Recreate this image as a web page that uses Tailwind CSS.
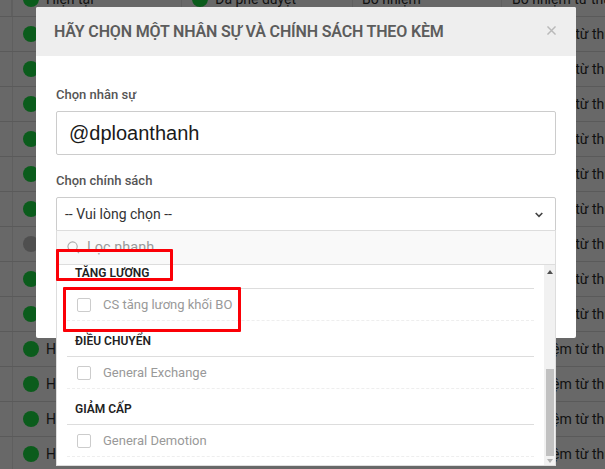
<!DOCTYPE html>
<html>
<head>
<meta charset="utf-8">
<script src="https://cdn.jsdelivr.net/npm/@tailwindcss/browser@4"></script>
</head>
<body class="m-0">
<div class="relative w-[605px] h-[469px] overflow-hidden bg-[#686868] font-['Roboto',sans-serif] text-[14px] text-[#111]">
  <!-- background table -->
  <div class="-mt-[18px] flex flex-col bg-[linear-gradient(#5f5f5f,#5f5f5f)] bg-[length:1px_100%] bg-[position:12px_0] bg-no-repeat">
    <div class="h-[35px] border-b border-[#5a5a5a] grid grid-cols-[12px_170px_171px_149px_103px]"><div class="border-r border-[#5f5f5f]"></div><div class="border-r border-[#5f5f5f] flex items-center pl-[11px] gap-[7px]"><span class="w-4 h-4 rounded-full bg-[#0b5c1c]"></span>Hiện tại</div><div class="border-r border-[#5f5f5f] flex items-center pl-[10px] gap-[7px]"><span class="w-4 h-4 rounded-full bg-[#0b5c1c]"></span>Đã phê duyệt</div><div class="border-r border-[#5f5f5f] flex items-center pl-[9px] whitespace-nowrap">Bổ nhiệm</div><div class="flex items-center pl-[10px] whitespace-nowrap">Bổ nhiệm từ thử việc</div></div>
    <div class="h-[35px] border-b border-[#5a5a5a] flex items-center pl-[23px] gap-[7px] whitespace-nowrap"><span class="w-4 h-4 rounded-full bg-[#0b5c1c] shrink-0"></span><span class="w-[460px] shrink-0">Hiện tại</span>Bổ nhiệm từ thử việc</div>
    <div class="h-[35px] border-b border-[#5a5a5a] flex items-center pl-[23px] gap-[7px] whitespace-nowrap"><span class="w-4 h-4 rounded-full bg-[#0b5c1c] shrink-0"></span><span class="w-[460px] shrink-0">Hiện tại</span>Bổ nhiệm từ thử việc</div>
    <div class="h-[35px] border-b border-[#5a5a5a] flex items-center pl-[23px] gap-[7px] whitespace-nowrap"><span class="w-4 h-4 rounded-full bg-[#0b5c1c] shrink-0"></span><span class="w-[460px] shrink-0">Hiện tại</span>Bổ nhiệm từ thử việc</div>
    <div class="h-[35px] border-b border-[#5a5a5a] flex items-center pl-[23px] gap-[7px] whitespace-nowrap"><span class="w-4 h-4 rounded-full bg-[#0b5c1c] shrink-0"></span><span class="w-[460px] shrink-0">Hiện tại</span>Bổ nhiệm từ thử việc</div>
    <div class="h-[35px] border-b border-[#5a5a5a] flex items-center pl-[23px] gap-[7px] whitespace-nowrap"><span class="w-4 h-4 rounded-full bg-[#0b5c1c] shrink-0"></span><span class="w-[460px] shrink-0">Hiện tại</span>Bổ nhiệm từ thử việc</div>
    <div class="h-[35px] border-b border-[#5a5a5a] flex items-center pl-[23px] gap-[7px] whitespace-nowrap"><span class="w-4 h-4 rounded-full bg-[#0b5c1c] shrink-0"></span><span class="w-[460px] shrink-0">Hiện tại</span>Bổ nhiệm từ thử việc</div>
    <div class="h-[35px] border-b border-[#5a5a5a] flex items-center pl-[23px] gap-[7px] whitespace-nowrap"><span class="w-4 h-4 rounded-full bg-[#4f4f4f] shrink-0"></span><span class="w-[460px] shrink-0">Hiện tại</span>Bổ nhiệm từ thử việc</div>
    <div class="h-[35px] border-b border-[#5a5a5a] flex items-center pl-[23px] gap-[7px] whitespace-nowrap"><span class="w-4 h-4 rounded-full bg-[#0b5c1c] shrink-0"></span><span class="w-[460px] shrink-0">Hiện tại</span>Bổ nhiệm từ thử việc</div>
    <div class="h-[35px] border-b border-[#5a5a5a] flex items-center pl-[23px] gap-[7px] whitespace-nowrap"><span class="w-4 h-4 rounded-full bg-[#0b5c1c] shrink-0"></span><span class="w-[460px] shrink-0">Hiện tại</span>Bổ nhiệm từ thử việc</div>
    <div class="h-[35px] border-b border-[#5a5a5a] flex items-center pl-[23px] gap-[7px] whitespace-nowrap"><span class="w-4 h-4 rounded-full bg-[#0b5c1c] shrink-0"></span><span class="w-[460px] shrink-0">Hiện tại</span>Bổ nhiệm từ thử việc</div>
    <div class="h-[35px] border-b border-[#5a5a5a] flex items-center pl-[23px] gap-[7px] whitespace-nowrap"><span class="w-4 h-4 rounded-full bg-[#0b5c1c] shrink-0"></span><span class="w-[460px] shrink-0">Hiện tại</span>Bổ nhiệm từ thử việc</div>
    <div class="h-[35px] border-b border-[#5a5a5a] flex items-center pl-[23px] gap-[7px] whitespace-nowrap"><span class="w-4 h-4 rounded-full bg-[#0b5c1c] shrink-0"></span><span class="w-[460px] shrink-0">Hiện tại</span>Bổ nhiệm từ thử việc</div>
    <div class="h-[35px] border-b border-[#5a5a5a] flex items-center pl-[23px] gap-[7px] whitespace-nowrap"><span class="w-4 h-4 rounded-full bg-[#0b5c1c] shrink-0"></span><span class="w-[460px] shrink-0">Hiện tại</span>Bổ nhiệm từ thử việc</div>
  </div>

  <!-- modal -->
  <div class="absolute left-[36px] top-[7px] w-[540px] h-[331px] bg-white rounded-[2px]">
    <div class="h-[49px] bg-[#eeeeee] flex items-center justify-between pl-[18px] pr-[20px] rounded-t-[2px]">
      <h2 class="text-[16px] font-semibold text-[#5c5c5c] uppercase whitespace-nowrap tracking-[-0.01em]">Hãy chọn một nhân sự và chính sách theo kèm</h2>
      <svg class="w-[9px] h-[9px] mb-[2px]" viewBox="0 0 10 10" fill="none" stroke="#b9b9b9" stroke-width="1.6"><path d="M0.5 0.5 9.5 9.5M9.5 0.5 0.5 9.5"/></svg>
    </div>
    <div class="px-[20px] pt-[31px]">
      <label class="block text-[13px] font-medium text-[#555] leading-[16px] mb-[8px]">Chọn nhân sự</label>
      <div class="h-[44px] border border-[#cccccc] rounded-[2px] flex items-center pl-[12px] font-['Liberation_Sans',sans-serif] text-[20px] text-[#1a1a1a]">@dploanthanh</div>
      <label class="block text-[13px] font-medium text-[#555] leading-[16px] mt-[18px] mb-[8px]">Chọn chính sách</label>
      <div class="h-[35px] border border-[#cccccc] rounded-t-[2px] flex items-center justify-between pl-[8px] pr-[12px] text-[14px] text-[#333]">
        <span>-- Vui lòng chọn --</span>
        <svg class="w-[8px] h-[6px]" viewBox="0 0 8 6" fill="none" stroke="#444" stroke-width="1.6"><path d="M0.7 1 4 4.4 7.3 1"/></svg>
      </div>
    </div>
  </div>

  <!-- dropdown -->
  <div class="absolute left-[56px] top-[230px] w-[500px] h-[236px] bg-white border border-[#dddddd] flex flex-col">
    <div class="h-[34px] shrink-0 bg-[#f9f9f9] border-b border-[#dddddd] flex items-center pl-[10px] gap-[7px] text-[14.5px] text-[#999]">
      <svg class="w-[13px] h-[13px]" viewBox="0 0 14 14" fill="none" stroke="#aaa" stroke-width="1.2"><circle cx="6" cy="6" r="5"/><path d="M10 10 13 13"/></svg>
      <span>Lọc nhanh</span>
    </div>
    <div class="flex flex-1 min-h-0">
      <div class="flex-1 pl-[10px] pr-[10px]">
        <div class="h-[24px] border-b border-[#dddddd] flex items-end pl-[8px] pb-[9px] text-[12px] font-semibold text-[#222] leading-none">TĂNG LƯƠNG</div>
        <div class="h-[32px] border-b border-dashed border-[#eeeeee] flex items-center pl-[10px] gap-[12px] text-[13px] text-[#999]"><span class="w-[14px] h-[14px] border border-[#cccccc] rounded-[2px]"></span>CS tăng lương khối BO</div>
        <div class="h-[36px] border-b border-[#dddddd] flex items-end pl-[8px] pb-[9px] text-[12px] font-semibold text-[#222] leading-none">ĐIỀU CHUYỂN</div>
        <div class="h-[32px] border-b border-dashed border-[#eeeeee] flex items-center pl-[10px] gap-[12px] text-[13px] text-[#999]"><span class="w-[14px] h-[14px] border border-[#cccccc] rounded-[2px]"></span>General Exchange</div>
        <div class="h-[36px] border-b border-[#dddddd] flex items-end pl-[8px] pb-[9px] text-[12px] font-semibold text-[#222] leading-none">GIẢM CẤP</div>
        <div class="h-[32px] border-b border-dashed border-[#eeeeee] flex items-center pl-[10px] gap-[12px] text-[13px] text-[#999]"><span class="w-[14px] h-[14px] border border-[#cccccc] rounded-[2px]"></span>General Demotion</div>
      </div>
      <div class="w-[11px] shrink-0 bg-[#f1f1f1] flex flex-col items-center justify-between pb-[2px] pt-[5px]">
        <svg class="w-[6px] h-[4px]" viewBox="0 0 6 4" fill="#505050"><path d="M3 0 6 4H0Z"/></svg>
        <div class="flex flex-col items-center gap-[3px] w-full">
          <div class="w-[8px] h-[87px] bg-[#c1c1c1]"></div>
          <svg class="w-[6px] h-[4px]" viewBox="0 0 6 4" fill="#b0b0b0"><path d="M0 0H6L3 4Z"/></svg>
        </div>
      </div>
    </div>
  </div>

  <!-- red annotation boxes -->
  <div class="absolute left-[56px] top-[249px] w-[117px] h-[32px] border-[3px] border-[#fb0007] rounded-[1px]"></div>
  <div class="absolute left-[63px] top-[287px] w-[178px] h-[45px] border-[3px] border-[#fb0007] rounded-[1px]"></div>
</div>
</body>
</html>
